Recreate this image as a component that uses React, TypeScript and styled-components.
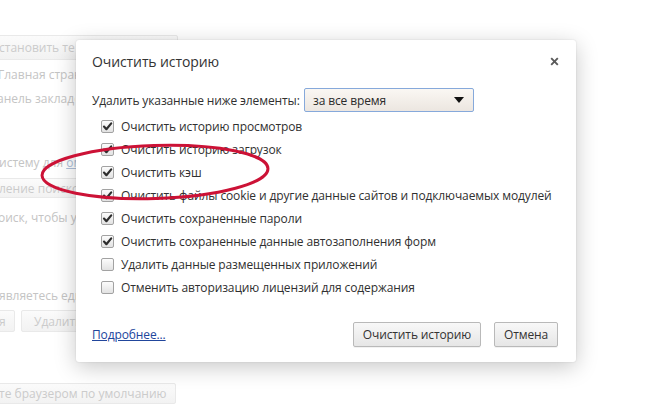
import React from "react";
import styled, { createGlobalStyle } from "styled-components";

const Global = createGlobalStyle`
  html, body { margin: 0; padding: 0; background: #fff; }
  body { width: 647px; height: 410px; overflow: hidden; font-family: "Open Sans", "Noto Sans", sans-serif; }
`;

const Root = styled.div`
  position: relative;
  width: 647px;
  height: 410px;
  overflow: hidden;
  background: #fff;
`;

/* ---------- faded settings page behind the dialog ---------- */
const Page = styled.div`
  display: flex;
  flex-direction: column;
  align-items: flex-start;
  padding-top: 35px;
  font-size: 12px;
  color: #c4c4c4;
`;

const FadedBox = styled.div<{ $w: number; $h: number; $mt?: number }>`
  box-sizing: border-box;
  width: ${(p) => p.$w}px;
  height: ${(p) => p.$h}px;
  margin-top: ${(p) => p.$mt ?? 0}px;
  margin-left: -12px;
  padding-left: 10px;
  display: flex;
  align-items: center;
  border: 1px solid #e9e9e9;
  border-radius: 2px;
  background: linear-gradient(#fbfbfb, #f2f2f2);
  color: #cbcbcb;
  white-space: nowrap;
  overflow: hidden;
`;

const Clip = styled.span<{ $w: number }>`
  display: block;
  width: ${(p) => p.$w}px;
  overflow: hidden;
  white-space: nowrap;
`;

const FadedLine = styled.div<{ $mt: number; $ml?: number }>`
  margin-top: ${(p) => p.$mt}px;
  margin-left: ${(p) => p.$ml ?? 0}px;
  width: 78px;
  overflow: hidden;
  line-height: 16px;
  height: 16px;
  white-space: nowrap;
`;

const FadedLink = styled.span`
  color: #aebfd9;
  text-decoration: underline;
`;

const FadedRow = styled.div<{ $mt: number }>`
  display: flex;
  gap: 6px;
  margin-top: ${(p) => p.$mt}px;
  margin-left: -12px;
`;

const FadedButton = styled.div<{ $w: number; $pl: number }>`
  box-sizing: border-box;
  width: ${(p) => p.$w}px;
  height: 22px;
  padding-left: ${(p) => p.$pl}px;
  display: flex;
  align-items: center;
  border: 1px solid #e9e9e9;
  border-radius: 2px;
  background: linear-gradient(#fbfbfb, #f2f2f2);
  color: #cbcbcb;
  white-space: nowrap;
  overflow: hidden;
`;

/* ---------- dialog ---------- */
const Overlay = styled.div`
  position: absolute;
  inset: 0;
`;

const Dialog = styled.div`
  position: absolute;
  left: 76px;
  top: 40px;
  width: 500px;
  height: 322px;
  box-sizing: border-box;
  padding: 12px 18px 15px 16px;
  background: #fff;
  border-radius: 3px;
  box-shadow: 0 5px 22px rgba(0, 0, 0, 0.22), 0 0 2px rgba(0, 0, 0, 0.12);
  display: flex;
  flex-direction: column;
  font-family: "Open Sans", "Noto Sans", sans-serif;
  font-size: 12px;
  letter-spacing: -0.12px;
  color: #303030;
`;

const Header = styled.div`
  display: flex;
  align-items: center;
  justify-content: space-between;
  height: 18px;
`;

const Title = styled.div`
  font-size: 14px;
  color: #333;
  letter-spacing: -0.1px;
`;

const Close = styled.div`
  width: 12px;
  height: 12px;
  margin-right: -2px;
  display: flex;
  align-items: center;
  justify-content: center;
`;

const RangeRow = styled.div`
  display: flex;
  align-items: center;
  margin-top: 18px;
  height: 24px;
`;

const RangeLabel = styled.span`
  width: 212px;
  white-space: nowrap;
`;

const Select = styled.div`
  box-sizing: border-box;
  width: 170px;
  height: 24px;
  padding: 0 9px 0 8px;
  display: flex;
  align-items: center;
  justify-content: space-between;
  border: 1px solid #86a9db;
  border-radius: 2px;
  background: linear-gradient(#faf7f3, #ece6e0);
  color: #2a2a2a;
`;

const List = styled.div`
  display: flex;
  flex-direction: column;
  margin-top: 3px;
  margin-left: 9px;
`;

const Row = styled.label`
  display: flex;
  align-items: center;
  gap: 7px;
  height: 23px;
  white-space: nowrap;
`;

const Box = styled.span<{ $checked: boolean }>`
  box-sizing: border-box;
  width: 13px;
  height: 13px;
  flex: none;
  display: flex;
  align-items: center;
  justify-content: center;
  border: 1px solid #a2a2a2;
  border-radius: 2px;
  background: linear-gradient(#fcfcfc, #e2e2e2);
`;

const Footer = styled.div`
  margin-top: auto;
  display: flex;
  align-items: center;
  justify-content: space-between;
  height: 25px;
`;

const Link = styled.a`
  color: #21469c;
  text-decoration: underline;
  cursor: pointer;
`;

const Buttons = styled.div`
  display: flex;
  gap: 13px;
`;

const Button = styled.button<{ $w: number }>`
  box-sizing: border-box;
  width: ${(p) => p.$w}px;
  height: 25px;
  border: 1px solid #b9b9b9;
  border-radius: 2px;
  background: linear-gradient(#f8f8f8, #e6e6e6);
  box-shadow: 0 1px 0 rgba(0, 0, 0, 0.05);
  font-family: "Open Sans", "Noto Sans", sans-serif;
  font-size: 12px;
  letter-spacing: -0.12px;
  color: #333;
  padding: 0;
`;

const Annotation = styled.svg`
  position: absolute;
  left: 0;
  top: 0;
  pointer-events: none;
`;

const items: { text: string; checked: boolean }[] = [
  { text: "Очистить историю просмотров", checked: true },
  { text: "Очистить историю загрузок", checked: true },
  { text: "Очистить кэш", checked: true },
  { text: "Очистить файлы cookie и другие данные сайтов и подключаемых модулей", checked: true },
  { text: "Очистить сохраненные пароли", checked: true },
  { text: "Очистить сохраненные данные автозаполнения форм", checked: true },
  { text: "Удалить данные размещенных приложений", checked: false },
  { text: "Отменить авторизацию лицензий для содержания", checked: false },
];

const Check = () => (
  <svg width="11" height="11" viewBox="0 0 11 11">
    <path d="M2 5.6 L4.4 8.2 L9.2 2.4" fill="none" stroke="#2e2e2e" strokeWidth="2.2" strokeLinecap="round" strokeLinejoin="round" />
  </svg>
);

export default function App() {
  return (
    <Root>
      <Global />
      <Page>
        <FadedBox $w={190} $h={25}><Clip $w={76}>становить тему</Clip></FadedBox>
        <FadedLine $mt={7} $ml={-2}>Главная страница</FadedLine>
        <FadedLine $mt={8} $ml={-3}>анель закладок</FadedLine>
        <FadedLine $mt={48} $ml={-1}>
          истему для <FadedLink>омнибокса</FadedLink>
        </FadedLine>
        <FadedBox $w={200} $h={20} $mt={7}><Clip $w={78}>ление поисковыми</Clip></FadedBox>
        <FadedLine $mt={12} $ml={-2}>оиск, чтобы ускорить</FadedLine>
        <FadedLine $mt={62} $ml={-1}>являетесь единственным</FadedLine>
        <FadedRow $mt={6}>
          <FadedButton $w={27} $pl={10}>я</FadedButton>
          <FadedButton $w={80} $pl={12}>Удалить</FadedButton>
        </FadedRow>
        <FadedBox $w={188} $h={21} $mt={51}>те браузером по умолчанию</FadedBox>
      </Page>

      <Overlay>
        <Dialog>
          <Header>
            <Title>Очистить историю</Title>
            <Close>
              <svg width="9" height="9" viewBox="0 0 9 9">
                <path d="M1.2 1.2 L7.8 7.8 M7.8 1.2 L1.2 7.8" stroke="#5a5a5a" strokeWidth="1.9" />
              </svg>
            </Close>
          </Header>
          <RangeRow>
            <RangeLabel>Удалить указанные ниже элементы:</RangeLabel>
            <Select>
              <span>за все время</span>
              <svg width="10" height="6" viewBox="0 0 10 6">
                <path d="M0 0 H10 L5 6 Z" fill="#111" />
              </svg>
            </Select>
          </RangeRow>
          <List>
            {items.map((it) => (
              <Row key={it.text}>
                <Box $checked={it.checked}>{it.checked && <Check />}</Box>
                <span>{it.text}</span>
              </Row>
            ))}
          </List>
          <Footer>
            <Link>Подробнее...</Link>
            <Buttons>
              <Button $w={128}>Очистить историю</Button>
              <Button $w={64}>Отмена</Button>
            </Buttons>
          </Footer>
        </Dialog>
      </Overlay>

      <Annotation width="647" height="410" viewBox="0 0 647 410">
        <ellipse cx="155" cy="172" rx="113" ry="26.5" transform="rotate(-1.8 155 172)" fill="none" stroke="#cc1236" strokeWidth="3" />
      </Annotation>
    </Root>
  );
}
